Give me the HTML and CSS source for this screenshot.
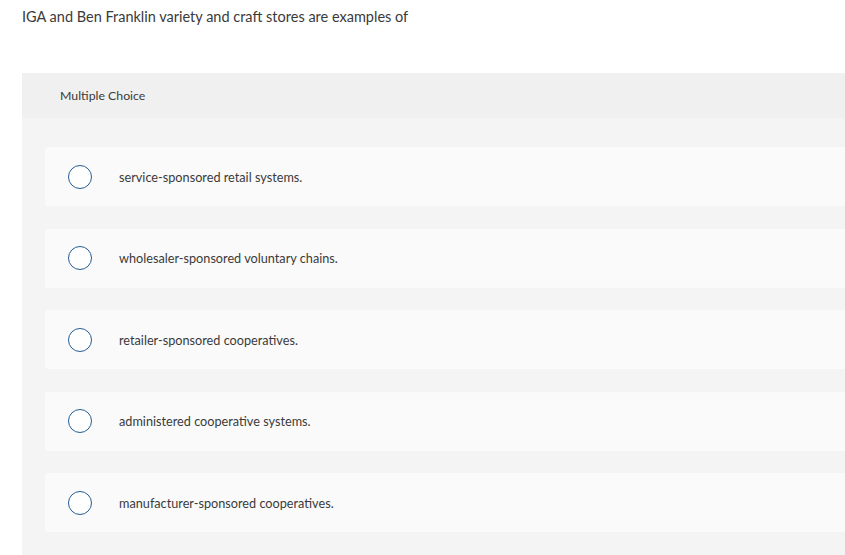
FILE: index.html
```html
<!DOCTYPE html>
<html>
<head>
<meta charset="utf-8">
<link rel="stylesheet" href="styles.css">
</head>
<body>
<div class="page">
  <p class="question">IGA and Ben Franklin variety and craft stores are examples of</p>
  <div class="panel">
    <div class="panel-head">Multiple Choice</div>
    <div class="panel-body">
      <div class="option"><span class="radio"></span><span class="label">service-sponsored retail systems.</span></div>
      <div class="option"><span class="radio"></span><span class="label">wholesaler-sponsored voluntary chains.</span></div>
      <div class="option"><span class="radio"></span><span class="label">retailer-sponsored cooperatives.</span></div>
      <div class="option"><span class="radio"></span><span class="label">administered cooperative systems.</span></div>
      <div class="option"><span class="radio"></span><span class="label">manufacturer-sponsored cooperatives.</span></div>
    </div>
  </div>
</div>
</body>
</html>
```

FILE: styles.css
```css
html, body {
  margin: 0;
  padding: 0;
  background: #fff;
  overflow: hidden;
}
.page {
  width: 845px;
  height: 555px;
  font-family: Lato, "Liberation Sans", sans-serif;
  color: #3a3a3a;
  overflow: hidden;
}
.question {
  margin: 0;
  padding: 8px 0 0 22px;
  font-size: 14.5px;
  line-height: 18px;
  height: 73px;
  box-sizing: border-box;
}
.panel {
  margin-left: 22px;
  background: #f4f4f4;
  height: 500px;
}
.panel-head {
  background: #f0f0f0;
  height: 45px;
  box-sizing: border-box;
  padding-left: 38px;
  display: flex;
  align-items: center;
  font-size: 12.3px;
}
.panel-body {
  padding: 29px 0 0 23px;
  display: flex;
  flex-direction: column;
  gap: 22.6px;
}
.option {
  height: 59px;
  background: #fafafa;
  border-radius: 3px 0 0 3px;
  display: flex;
  align-items: center;
  padding-left: 23px;
}
.radio {
  width: 22px;
  height: 22px;
  border: 1.5px solid #245c94;
  border-radius: 50%;
  flex: none;
  background: #fff;
}
.label {
  margin-left: 27px;
  font-size: 12.7px;
}
```
